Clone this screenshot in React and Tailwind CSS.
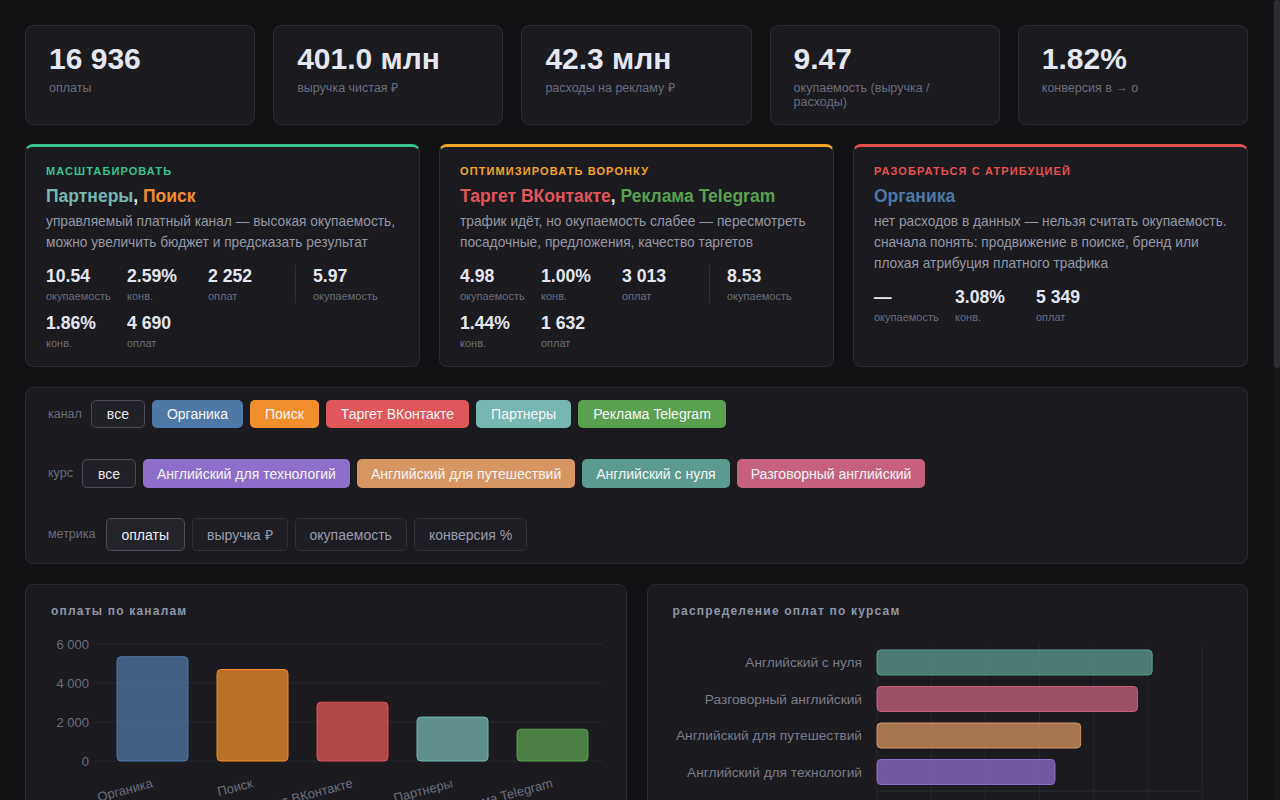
const kpis = [
  { value: '16 936', label: 'оплаты' },
  { value: '401.0 млн', label: 'выручка чистая ₽' },
  { value: '42.3 млн', label: 'расходы на рекламу ₽' },
  { value: '9.47', label: 'окупаемость (выручка / расходы)' },
  { value: '1.82%', label: 'конверсия в → о' },
];

const recs = [
  {
    tag: 'масштабировать',
    accent: 'border-t-[#34c38f]',
    tagColor: 'text-[#34c38f]',
    channels: [
      { name: 'Партнеры', color: 'text-[#76b7b2]' },
      { name: 'Поиск', color: 'text-[#f28e2b]' },
    ],
    text: 'управляемый платный канал — высокая окупаемость, можно увеличить бюджет и предсказать результат',
    groups: [
      [['10.54', 'окупаемость'], ['2.59%', 'конв.'], ['2 252', 'оплат']],
      [['5.97', 'окупаемость'], ['1.86%', 'конв.'], ['4 690', 'оплат']],
    ],
  },
  {
    tag: 'оптимизировать воронку',
    accent: 'border-t-[#f5a524]',
    tagColor: 'text-[#f5a524]',
    channels: [
      { name: 'Таргет ВКонтакте', color: 'text-[#e15759]' },
      { name: 'Реклама Telegram', color: 'text-[#59a14f]' },
    ],
    text: 'трафик идёт, но окупаемость слабее — пересмотреть посадочные, предложения, качество таргетов',
    groups: [
      [['4.98', 'окупаемость'], ['1.00%', 'конв.'], ['3 013', 'оплат']],
      [['8.53', 'окупаемость'], ['1.44%', 'конв.'], ['1 632', 'оплат']],
    ],
  },
  {
    tag: 'разобраться с атрибуцией',
    accent: 'border-t-[#e8504f]',
    tagColor: 'text-[#e8504f]',
    channels: [{ name: 'Органика', color: 'text-[#4e79a7]' }],
    text: 'нет расходов в данных — нельзя считать окупаемость. сначала понять: продвижение в поиске, бренд или плохая атрибуция платного трафика',
    groups: [[['—', 'окупаемость'], ['3.08%', 'конв.'], ['5 349', 'оплат']]],
  },
];

const channelPills = [
  { name: 'Органика', bg: 'bg-[#4e79a7]' },
  { name: 'Поиск', bg: 'bg-[#f28e2b]' },
  { name: 'Таргет ВКонтакте', bg: 'bg-[#e15759]' },
  { name: 'Партнеры', bg: 'bg-[#76b7b2]' },
  { name: 'Реклама Telegram', bg: 'bg-[#59a14f]' },
];

const coursePills = [
  { name: 'Английский для технологий', bg: 'bg-[#8d6ecb]' },
  { name: 'Английский для путешествий', bg: 'bg-[#d79562]' },
  { name: 'Английский с нуля', bg: 'bg-[#5b9b8f]' },
  { name: 'Разговорный английский', bg: 'bg-[#c5617e]' },
];

const metrics = ['оплаты', 'выручка ₽', 'окупаемость', 'конверсия %'];

const channelBars = [
  { name: 'Органика', value: 5349, color: '#4e79a7' },
  { name: 'Поиск', value: 4690, color: '#f28e2b' },
  { name: 'Таргет ВКонтакте', value: 3013, color: '#e15759' },
  { name: 'Партнеры', value: 2252, color: '#76b7b2' },
  { name: 'Реклама Telegram', value: 1632, color: '#59a14f' },
];

const courseBars = [
  { name: 'Английский с нуля', value: 5080, color: '#5b9b8f' },
  { name: 'Разговорный английский', value: 4810, color: '#c5617e' },
  { name: 'Английский для путешествий', value: 3760, color: '#d79562' },
  { name: 'Английский для технологий', value: 3286, color: '#8d6ecb' },
];

const tableRows = [
  ['Органика', '5 349', '128.4 млн', '—', '—', '3.08%'],
  ['Поиск', '4 690', '112.6 млн', '18.9 млн', '5.97', '1.86%'],
  ['Таргет ВКонтакте', '3 013', '72.3 млн', '14.5 млн', '4.98', '1.00%'],
  ['Партнеры', '2 252', '54.1 млн', '5.1 млн', '10.54', '2.59%'],
  ['Реклама Telegram', '1 632', '33.6 млн', '3.9 млн', '8.53', '1.44%'],
];

const card = 'rounded-lg border border-[#2a2a31] bg-[#1a1a1f]';
const chartFont = "'Liberation Sans', Arial, sans-serif";

const Stat = ({ value, label }) => (
  <div className="w-[81px]">
    <div className="text-[17.6px] font-bold leading-[22px] text-[#e4e7f1]">{value}</div>
    <div className="mt-[2px] text-[11px] leading-[14px] text-[#6b6e7d]">{label}</div>
  </div>
);

const RecCard = ({ r }) => (
  <div className={`${card} border-t-[3px] ${r.accent} pt-4 pr-[17px] pb-4 pl-5`}>
    <div className={`text-[11px] font-bold uppercase leading-4 tracking-[0.1em] ${r.tagColor}`}>{r.tag}</div>
    <div className="mt-[6px] text-[17.5px] font-bold leading-[23px]">
      {r.channels.map((c, i) => (
        <span key={c.name}>
          {i > 0 && <span className="text-[#e4e7f1]">, </span>}
          <span className={c.color}>{c.name}</span>
        </span>
      ))}
    </div>
    <p className="mt-[3px] text-[13.76px] leading-[21px] text-[#9597a5]">{r.text}</p>
    <div className="mt-3 flex flex-wrap gap-y-[9px]">
      {r.groups.map((g, gi) => [
        gi > 0 && <div key={`d${gi}`} className="ml-[6px] mr-[17px] w-px bg-[#2e2e36]" />,
        ...g.map(([v, l], si) => <Stat key={`${gi}-${si}`} value={v} label={l} />),
      ])}
    </div>
  </div>
);

const ChannelChart = () => {
  const base = 131;
  const scale = 117 / 6000;
  return (
    <svg width="552" height="260" className="mt-[11px] block overflow-visible" fontFamily={chartFont}>
      {[0, 2000, 4000, 6000].map((t) => {
        const y = base - t * scale;
        return (
          <g key={t}>
            <line x1="43" x2="552" y1={y} y2={y} stroke="#27272e" strokeWidth="1" />
            <text x="38" y={y + 4.5} textAnchor="end" fontSize="13" fill="#6b6e7d">
              {t === 0 ? '0' : `${t / 1000} 000`}
            </text>
          </g>
        );
      })}
      {channelBars.map((b, i) => {
        const cx = 101.5 + i * 100;
        const h = b.value * scale;
        return (
          <g key={b.name}>
            <rect x={cx - 35.5} y={base - h} width="71" height={h} rx="4" fill={b.color} fillOpacity="0.75" stroke={b.color} strokeWidth="1" />
            <text transform={`translate(${cx + 1} 157) rotate(-15)`} textAnchor="end" fontSize="13" fill="#6b6e7d">
              {b.name}
            </text>
          </g>
        );
      })}
    </svg>
  );
};

const CourseChart = () => {
  const left = 204;
  const step = 325 / 6;
  return (
    <svg width="551" height="260" className="mt-[11px] block overflow-visible" fontFamily={chartFont}>
      {[0, 1, 2, 3, 4, 5, 6].map((k) => (
        <g key={k}>
          <line x1={left + k * step} x2={left + k * step} y1="15" y2="169" stroke="#26262d" strokeWidth="1" />
          <text x={left + k * step} y="183" textAnchor="middle" fontSize="13" fill="#6b6e7d">
            {k === 0 ? '0' : `${k} 000`}
          </text>
        </g>
      ))}
      <line x1={left} x2={left + 325} y1="161" y2="161" stroke="#2a2a31" strokeWidth="1" />
      {courseBars.map((b, i) => {
        const y = 20 + i * 36.5;
        const w = (b.value / 6000) * 325;
        return (
          <g key={b.name}>
            <rect x={left} y={y} width={w} height="25" rx="4" fill={b.color} fillOpacity="0.75" stroke={b.color} strokeWidth="1" />
            <text x="189" y={y + 17} textAnchor="end" fontSize="13.7" fill="#7a7c8a">
              {b.name}
            </text>
          </g>
        );
      })}
    </svg>
  );
};

const App = () => {
  return (
    <div className="flex h-screen bg-[#121214] font-['Liberation_Sans',Arial,sans-serif]">
      <main className="h-screen w-[1273px] shrink-0 overflow-y-auto [scrollbar-width:none]">
        <div className="flex flex-col px-[25px] pt-[25px] pb-[25px]">
          <div className="grid grid-cols-5 gap-[18px]">
            {kpis.map((k) => (
              <div key={k.label} className={`${card} px-[23px] pt-[15px] pb-[15px]`}>
                <div className="text-[30px] font-bold leading-[36px] text-[#e4e7f1]">{k.value}</div>
                <div className="mt-1 text-[12.5px] leading-[14px] text-[#6b6e7d]">{k.label}</div>
              </div>
            ))}
          </div>

          <div className="mt-[19px] grid grid-cols-3 gap-[19px]">
            {recs.map((r) => (
              <RecCard key={r.tag} r={r} />
            ))}
          </div>

          <div className={`${card} mt-5 flex flex-col gap-[30px] px-[22px] py-3`}>
            <div className="mb-px flex flex-wrap items-center gap-[7px]">
              <span className="mr-[2px] text-[12.5px] text-[#6b6e7d]">канал</span>
              <button className="flex h-7 items-center rounded-[5px] border border-[#4a4b57] bg-[#202027] px-[15px] text-sm text-[#e8e8ee]">все</button>
              {channelPills.map((p) => (
                <button key={p.name} className={`flex h-7 items-center rounded-[5px] px-[15px] text-sm text-[#f6f6f8] ${p.bg}`}>
                  {p.name}
                </button>
              ))}
            </div>
            <div className="flex flex-wrap items-center gap-[7px]">
              <span className="mr-[2px] text-[12.5px] text-[#6b6e7d]">курс</span>
              <button className="flex h-[29px] items-center rounded-[5px] border border-[#4a4b57] bg-[#202027] px-[15px] text-sm text-[#e8e8ee]">все</button>
              {coursePills.map((p) => (
                <button key={p.name} className={`flex h-[29px] items-center rounded-[5px] px-[14px] text-sm text-[#f6f6f8] ${p.bg}`}>
                  {p.name}
                </button>
              ))}
            </div>
            <div className="flex flex-wrap items-center gap-[7px]">
              <span className="mr-[3px] text-[12.5px] text-[#6b6e7d]">метрика</span>
              {metrics.map((m, i) => (
                <button
                  key={m}
                  className={
                    i === 0
                      ? 'flex h-[33px] items-center rounded-[5px] border border-[#4a4b57] bg-[#23232a] px-[15px] text-sm text-[#eeeef3]'
                      : 'flex h-[33px] items-center rounded-[5px] border border-[#2f3038] bg-[#1d1d23] px-[14px] text-sm text-[#9a9cab]'
                  }
                >
                  {m}
                </button>
              ))}
            </div>
          </div>

          <div className="mt-5 grid grid-cols-2 gap-5">
            <div className={`${card} h-[330px] px-[25px] pt-[18px]`}>
              <h3 className="text-xs font-bold leading-4 tracking-[0.1em] text-[#8e96a8]">оплаты по каналам</h3>
              <ChannelChart />
            </div>
            <div className={`${card} h-[330px] px-[25px] pt-[18px]`}>
              <h3 className="text-xs font-bold leading-4 tracking-[0.1em] text-[#8e96a8]">распределение оплат по курсам</h3>
              <CourseChart />
            </div>
          </div>

          <div className={`${card} mt-5 h-[780px] px-[25px] pt-[17px]`}>
            <h3 className="text-xs font-bold leading-4 tracking-[0.1em] text-[#8e96a8]">сводка по каналам</h3>
            <table className="mt-4 w-full text-left text-sm">
              <thead>
                <tr className="border-b border-[#2a2a31] text-xs text-[#6b6e7d]">
                  <th className="py-2 font-normal">канал</th>
                  <th className="py-2 font-normal">оплаты</th>
                  <th className="py-2 font-normal">выручка ₽</th>
                  <th className="py-2 font-normal">расходы ₽</th>
                  <th className="py-2 font-normal">окупаемость</th>
                  <th className="py-2 font-normal">конверсия</th>
                </tr>
              </thead>
              <tbody>
                {tableRows.map((row) => (
                  <tr key={row[0]} className="border-b border-[#24242a] text-[#c9cbd6]">
                    {row.map((c, i) => (
                      <td key={i} className="py-[10px]">{c}</td>
                    ))}
                  </tr>
                ))}
              </tbody>
            </table>
          </div>
        </div>
      </main>
      <div className="h-screen w-[7px] shrink-0 bg-[#161618] pl-px">
        <div className="h-[368px] w-full rounded-full bg-[#2c2c31]" />
      </div>
    </div>
  );
};

export default App;
